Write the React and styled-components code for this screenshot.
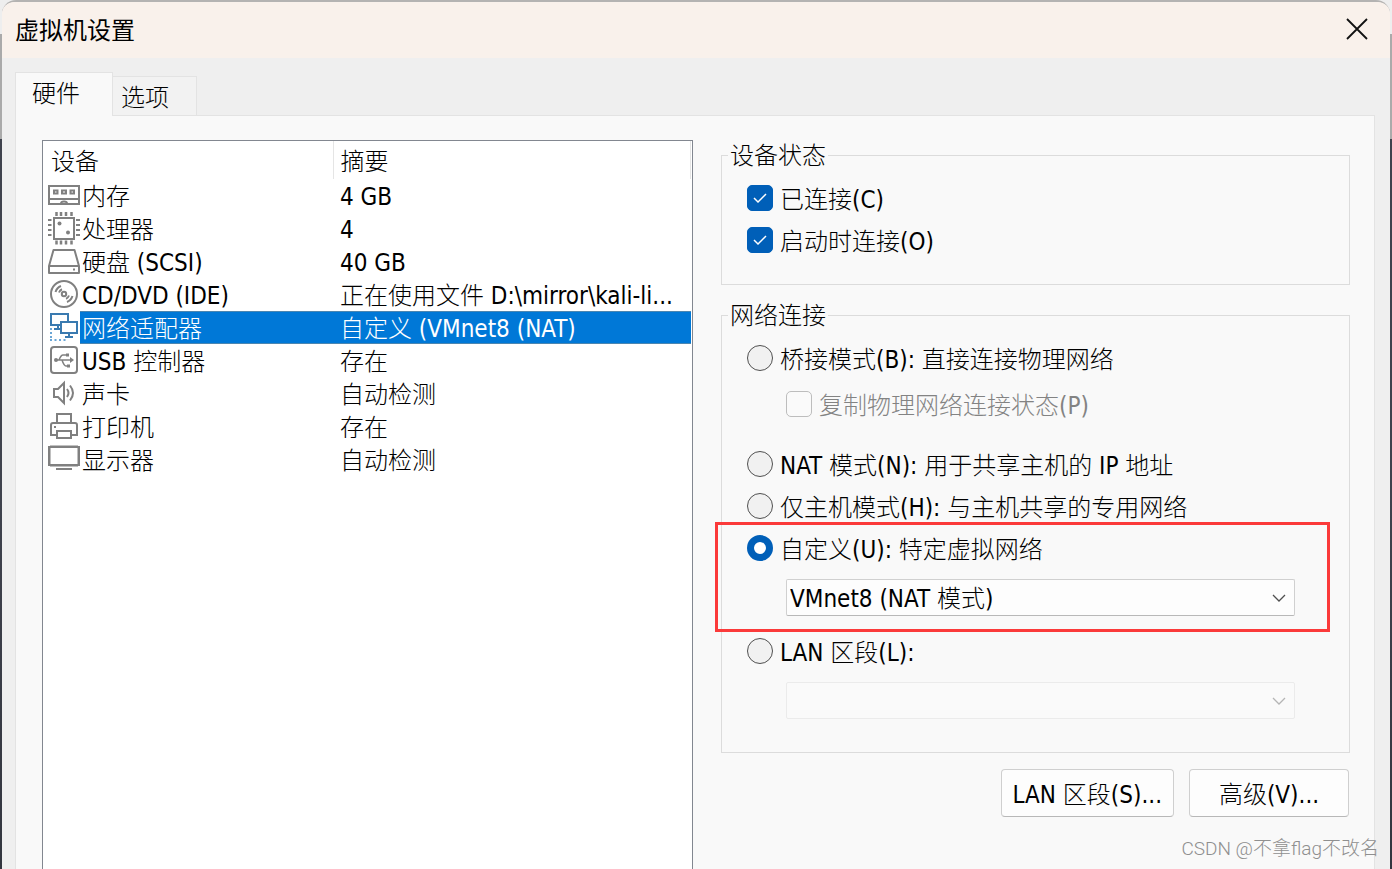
import React, { useState } from "react"
import styled, { createGlobalStyle, css } from "styled-components"

const GlobalStyle = createGlobalStyle`
  * {
    box-sizing: border-box;
  }
  body {
    margin: 0;
    background: linear-gradient(
      #eeeeee 0 34px,
      #aaaaaa 34px 139px,
      #3f424d 139px 500px,
      #33363f 100%
    );
    color: #000;
    font-family: "DejaVu Sans Condensed", "Noto Sans CJK SC Light",
      "Noto Sans CJK SC", sans-serif;
    font-size: 24px;
    line-height: 32px;
  }
  button,
  input,
  select {
    font: inherit;
    color: inherit;
    margin: 0;
  }
`

const Page = styled.div`
  min-height: 100vh;
  padding: 0 2px;
  display: flex;
  overflow: hidden;
`

const Dialog = styled.main`
  position: relative;
  flex: 1;
  min-width: 0;
  display: flex;
  flex-direction: column;
  border-top: 2px solid #b4b3b2;
  border-radius: 14px 14px 0 0;
  background: #efefef;
`

const TitleBar = styled.header`
  display: flex;
  align-items: center;
  justify-content: space-between;
  height: 56px;
  padding: 0 13px 2px;
  border-radius: 12px 12px 0 0;
  background: #f9f1eb;
`

const Title = styled.h1`
  margin: 0;
  font: 400 24px/32px "Noto Sans CJK SC", sans-serif;
`

const CloseButton = styled.button`
  display: flex;
  align-items: center;
  justify-content: center;
  width: 40px;
  height: 40px;
  padding: 0;
  border: 0;
  background: none;
`

const TabBar = styled.div`
  display: flex;
  align-items: flex-end;
  margin: 14px 15px 0 13px;
`

const Tab = styled.button`
  height: 39px;
  width: 84px;
  padding: 4px 0 0 8px;
  border: 1px solid #e3e3e3;
  border-width: 1px 1px 0 0;
  background: #f2f2f2;
  text-align: left;
  ${props =>
    props.$active &&
    css`
      height: 44px;
      width: 98px;
      margin-bottom: -1px;
      padding: 0 0 2px 16px;
      border-left-width: 1px;
      background: #f9f9f9;
      z-index: 1;
    `}
`

const Panel = styled.section`
  flex: 1;
  display: grid;
  grid-template-columns: minmax(0, 651fr) minmax(0, 629fr);
  gap: 28px;
  margin: 0 15px 0 13px;
  padding: 24px 24px 0 26px;
  border: 1px solid #e3e3e3;
  border-bottom: 0;
  background: #f9f9f9;
`

const DeviceList = styled.div`
  padding-right: 1px;
  border: 1px solid #828790;
  border-bottom: 0;
  background: #fff;
`

const DeviceTable = styled.table`
  width: 100%;
  table-layout: fixed;
  border-collapse: collapse;
`

const HeadCell = styled.th`
  height: 38px;
  padding: 4px 0 0 ${props => (props.$wide ? 8 : 7)}px;
  width: ${props => (props.$wide ? "290px" : "auto")};
  border-right: 1px solid #e5e5e5;
  font-weight: 400;
  text-align: left;
`

const Cell = styled.td`
  height: 33px;
  padding: 0;
`

const NameCell = styled.div`
  display: flex;
  padding-left: 5px;
`

const CellText = styled.span`
  display: block;
  flex: 1;
  height: 33px;
  padding: 2px 0 0 ${props => (props.$summary ? 7 : 2)}px;
  line-height: 33px;
  overflow: hidden;
  white-space: nowrap;
  ${props =>
    props.$selected &&
    css`
      color: #fff;
      background: #0078d7;
      box-shadow: inset 0 1px #4c86b0, inset 0 -1px #4c86b0;
    `}
`

const Settings = styled.div`
  min-width: 0;
`

const Group = styled.fieldset`
  min-width: 0;
  margin: 0 0 15px;
  padding: 0 6px ${props => props.$bottom}px;
  border: 1px solid #dcdcdc;
`

const Legend = styled.legend`
  padding: 2px 2px 0;
  line-height: 28px;
`

const GroupBody = styled.div`
  padding: 7px 19px 0;
`

const Option = styled.label`
  display: flex;
  align-items: center;
  gap: 7px;
  height: ${props => (props.$nested ? 50 : 42)}px;
  margin-bottom: ${props => (props.$nested ? 14 : 0)}px;
  padding-left: ${props => (props.$nested ? 39 : 0)}px;
  color: ${props => (props.$nested ? "#838383" : "inherit")};
  white-space: nowrap;
`

const OptionText = styled.span`
  padding-top: 4px;
`

const TickBox = styled.span`
  position: relative;
  width: 26px;
  height: 26px;
  flex: none;
  svg {
    position: absolute;
    inset: 0;
    pointer-events: none;
  }
`

const Checkbox = styled.input`
  appearance: none;
  display: block;
  width: 26px;
  height: 26px;
  border: 1px solid #bdbdbd;
  border-radius: 5px;
  background: #fafafa;
  &:checked {
    border-color: #005fb8;
    background: #005fb8;
  }
`

const Radio = styled.input`
  appearance: none;
  flex: none;
  width: 26px;
  height: 26px;
  border: 1px solid #505050;
  border-radius: 50%;
  background: #f1f1f1;
  &:checked {
    border: 7px solid #005fb8;
    background: #fff;
  }
`

const Highlighted = styled.div`
  position: relative;
  margin-bottom: 14px;
  &::after {
    content: "";
    position: absolute;
    inset: -5px -6px -16px -32px;
    border: 3px solid #fb3a3a;
    pointer-events: none;
  }
`

const SelectWrap = styled.div`
  position: relative;
  margin: 10px 29px 0 39px;
  svg {
    position: absolute;
    right: 9px;
    top: 14px;
    pointer-events: none;
  }
`

const Select = styled.select`
  appearance: none;
  display: block;
  width: 100%;
  height: 37px;
  padding: 2px 32px 0 3px;
  border: 1px solid #d0d0d0;
  border-bottom-color: #b8b8b8;
  border-radius: 2px;
  background: #fdfdfd;
  &:disabled {
    border-color: #ebebeb;
    background: #fafafa;
    opacity: 1;
  }
`

const Actions = styled.div`
  display: flex;
  justify-content: flex-end;
  gap: 15px;
  padding: 1px 1px 0 0;
`

const ActionButton = styled.button`
  min-width: 160px;
  height: 48px;
  padding: 3px 11px 0;
  border: 1px solid #cfcfcf;
  border-bottom-color: #b8b8b8;
  border-radius: 4px;
  background: #fdfdfd;
  white-space: nowrap;
`

const Watermark = styled.div`
  position: absolute;
  right: 11px;
  bottom: 4px;
  color: #8f8f8f;
  font: 300 19px/32px Roboto, "Noto Sans CJK SC Light", "Noto Sans CJK SC",
    sans-serif;
`

const Icon = ({ color = "#808080", children }) => (
  <svg
    width="32"
    height="33"
    viewBox="0 0 32 33"
    fill="none"
    stroke={color}
    strokeWidth="2"
    aria-hidden="true"
  >
    {children}
  </svg>
)

const MemoryIcon = () => (
  <Icon>
    <path d="M1 7h30v18H1zM0 20h32" />
    <path d="M13 24.500q0-2 3-2t3 2" />
    <path d="M6 11.500h3.500v3H6zM14 11.500h4v3h-4zM22.500 11.500H26v3h-3.500z" />
  </Icon>
)

const CpuIcon = () => (
  <Icon>
    <path d="M6 6h20v21H6z" />
    <path
      d="M8.500 0v4M13 0v4M18 0v4M23.500 0v4M8.500 28.500v4M13 28.500v4M18 28.500v4M23.500 28.500v4"
      strokeWidth="2.500"
    />
    <path d="M0 8h3.500M0 13h3.500M0 18h3.500M0 23h3.500M28 8h4M28 13h4M28 18h4M28 23h4" />
    <circle cx="11.500" cy="11.500" r="2" fill="#808080" stroke="none" />
    <circle cx="20" cy="20.500" r="2" fill="#808080" stroke="none" />
  </Icon>
)

const DiskIcon = () => (
  <Icon>
    <path d="M1 21 5.500 5h21L31 21v7H1zM1 21h30" strokeLinejoin="round" />
    <path d="M25 24.500h2" />
  </Icon>
)

const DiscIcon = () => (
  <Icon>
    <circle cx="16" cy="16" r="13" />
    <circle cx="16" cy="16" r="2.200" />
    <path d="M7.500 14Q9 9.500 13 8M11 14.500Q12 12 14 11.200M24.500 18Q23 22.500 19 24M21 17.500Q20 20 18 20.800" />
  </Icon>
)

const NetworkIcon = () => (
  <Icon color="#3a7ab0">
    <path d="M12 14H3V3h17v7M10 14v4M6 18h6" />
    <path d="M13 11h16v11H13zM21 22v4M17 26h8" />
    <path
      d="M3 17v2M3 21v2M3 25v2M2 29h2M6.500 29h2M11 29h2M15.500 29h2"
      stroke="#6aa6d6"
    />
  </Icon>
)

const UsbIcon = () => (
  <Icon>
    <rect x="3" y="3" width="26" height="26" rx="3" />
    <path d="M7 16h16M11 16q2-5 4-5h4M14 16q2 6 4 6h2" strokeWidth="1.500" />
    <circle cx="8" cy="16" r="2" fill="#808080" stroke="none" />
    <path d="m22 13 4 3-4 3z" fill="#808080" stroke="none" />
    <path d="M18 9.500h3v3h-3zM19 20.500h3v3h-3z" fill="#808080" stroke="none" />
  </Icon>
)

const SoundIcon = () => (
  <Icon>
    <path d="M6 12v8h4l6 6V6l-6 6z" />
    <path d="M19 12q3 4 0 8M22 8.500q6 7.500 0 15" />
  </Icon>
)

const PrinterIcon = () => (
  <Icon>
    <path d="M9 13V4h14v9M9 25H3V15q0-2 2-2h22q2 0 2 2v10h-6" />
    <path d="M9 21h14v7H9z" />
    <path d="M6 17h2" />
  </Icon>
)

const DisplayIcon = () => (
  <Icon>
    <path d="M1 4h30v18H1zM8 26h16" />
    <path d="M2 3h28v20H2z" strokeWidth="1" />
  </Icon>
)

const Chevron = ({ muted }) => (
  <svg width="14" height="10" viewBox="0 0 14 10" fill="none" aria-hidden="true">
    <path
      d="m1 2 6 6 6-6"
      stroke={muted ? "#b5b5b5" : "#4f4f4f"}
      strokeWidth="1.300"
    />
  </svg>
)

const devices = [
  { name: "内存", summary: "4 GB", icon: <MemoryIcon /> },
  { name: "处理器", summary: "4", icon: <CpuIcon /> },
  { name: "硬盘 (SCSI)", summary: "40 GB", icon: <DiskIcon /> },
  {
    name: "CD/DVD (IDE)",
    summary: "正在使用文件 D:\\mirror\\kali-li...",
    icon: <DiscIcon />,
  },
  {
    name: "网络适配器",
    summary: "自定义 (VMnet8 (NAT)",
    icon: <NetworkIcon />,
  },
  { name: "USB 控制器", summary: "存在", icon: <UsbIcon /> },
  { name: "声卡", summary: "自动检测", icon: <SoundIcon /> },
  { name: "打印机", summary: "存在", icon: <PrinterIcon /> },
  { name: "显示器", summary: "自动检测", icon: <DisplayIcon /> },
]

const Devices = () => {
  const [selected, setSelected] = useState("网络适配器")

  return (
    <DeviceList>
      <DeviceTable>
        <thead>
          <tr>
            <HeadCell $wide>设备</HeadCell>
            <HeadCell>摘要</HeadCell>
          </tr>
        </thead>
        <tbody>
          {devices.map(({ name, summary, icon }) => (
            <tr key={name} onClick={() => setSelected(name)}>
              <Cell>
                <NameCell>
                  {icon}
                  <CellText $selected={selected === name}>{name}</CellText>
                </NameCell>
              </Cell>
              <Cell>
                <CellText $summary $selected={selected === name}>
                  {summary}
                </CellText>
              </Cell>
            </tr>
          ))}
        </tbody>
      </DeviceTable>
    </DeviceList>
  )
}

const CheckOption = ({ label, initial, ...rest }) => {
  const [checked, setChecked] = useState(initial)

  return (
    <Option $nested={rest.disabled}>
      <TickBox>
        <Checkbox
          type="checkbox"
          checked={checked}
          onChange={() => setChecked(!checked)}
          {...rest}
        />
        {checked && (
          <svg width="26" height="26" viewBox="0 0 26 26" fill="none">
            <path d="m7 13 4 4 8-8" stroke="#fff" strokeWidth="1.500" />
          </svg>
        )}
      </TickBox>
      <OptionText>{label}</OptionText>
    </Option>
  )
}

const NetworkConnection = () => {
  const [mode, setMode] = useState("custom")

  const renderRadio = (value, label) => (
    <Option>
      <Radio
        type="radio"
        name="network"
        checked={mode === value}
        onChange={() => setMode(value)}
      />
      <OptionText>{label}</OptionText>
    </Option>
  )

  return (
    <Group $bottom={33}>
      <Legend>网络连接</Legend>
      <GroupBody>
        {renderRadio("bridged", "桥接模式(B): 直接连接物理网络")}
        <CheckOption label="复制物理网络连接状态(P)" initial={false} disabled />
        {renderRadio("nat", "NAT 模式(N): 用于共享主机的 IP 地址")}
        {renderRadio("host", "仅主机模式(H): 与主机共享的专用网络")}
        <Highlighted>
          {renderRadio("custom", "自定义(U): 特定虚拟网络")}
          <SelectWrap>
            <Select aria-label="特定虚拟网络">
              <option>VMnet8 (NAT 模式)</option>
            </Select>
            <Chevron />
          </SelectWrap>
        </Highlighted>
        {renderRadio("lan", "LAN 区段(L):")}
        <SelectWrap>
          <Select aria-label="LAN 区段" disabled />
          <Chevron muted />
        </SelectWrap>
      </GroupBody>
    </Group>
  )
}

const App = () => (
  <Page>
    <GlobalStyle />
    <Dialog>
      <TitleBar>
        <Title>虚拟机设置</Title>
        <CloseButton aria-label="关闭">
          <svg width="22" height="22" viewBox="0 0 22 22" aria-hidden="true">
            <path d="m1 1 20 20M21 1 1 21" stroke="#111" strokeWidth="1.800" />
          </svg>
        </CloseButton>
      </TitleBar>
      <TabBar role="tablist">
        <Tab role="tab" aria-selected="true" $active>
          硬件
        </Tab>
        <Tab role="tab" aria-selected="false">
          选项
        </Tab>
      </TabBar>
      <Panel>
        <Devices />
        <Settings>
          <Group $bottom={23}>
            <Legend>设备状态</Legend>
            <GroupBody>
              <CheckOption label="已连接(C)" initial />
              <CheckOption label="启动时连接(O)" initial />
            </GroupBody>
          </Group>
          <NetworkConnection />
          <Actions>
            <ActionButton>LAN 区段(S)...</ActionButton>
            <ActionButton>高级(V)...</ActionButton>
          </Actions>
        </Settings>
      </Panel>
      <Watermark>CSDN @不拿flag不改名</Watermark>
    </Dialog>
  </Page>
)

export default App
